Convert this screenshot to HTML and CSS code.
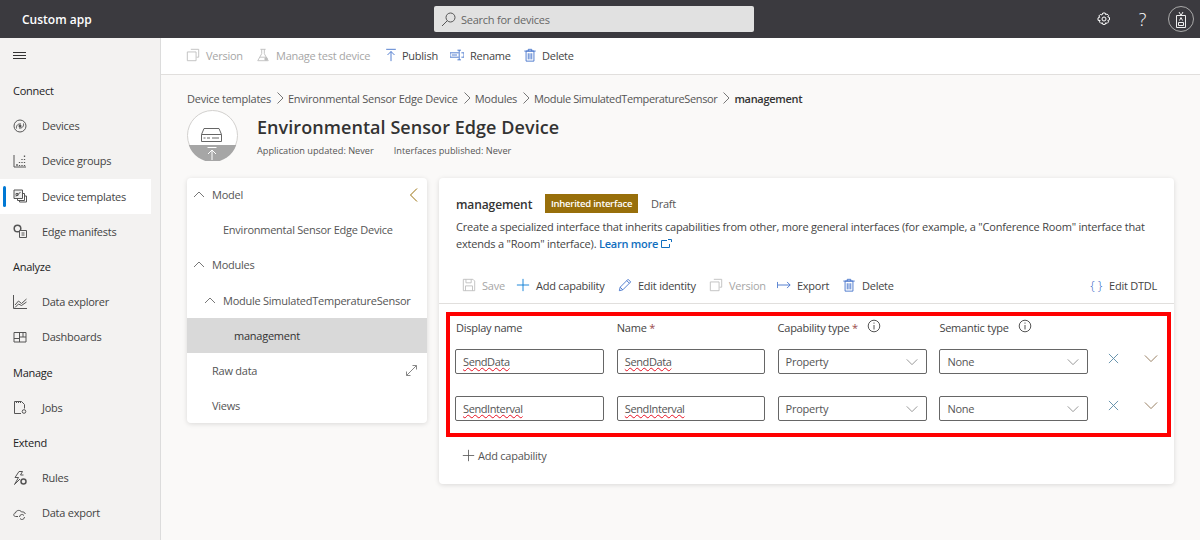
FILE: index.html
```html
<!DOCTYPE html>
<html lang="en">
<head>
    <meta charset="UTF-8">
    <meta name="viewport" content="width=device-width, initial-scale=1.0">
    <title>Device templates | Custom app</title>
    <link rel="stylesheet" href="styles.css">
</head>
<body>
    <svg class="sprites" width="0" height="0">
        <symbol id="i-copy" viewBox="0 0 16 16"><path d="M5.500 1.500h9v9h-2.500M1.500 4.500h10v10h-10z" fill="none" stroke="currentColor"/></symbol>
        <symbol id="i-flask" viewBox="0 0 16 16"><path d="M5 1.500h6M6.500 1.500v5L2 14.500h12L9.500 6.500v-5M4.500 10.500h7" fill="none" stroke="currentColor"/><circle cx="11.500" cy="12.500" r="2" fill="currentColor"/></symbol>
        <symbol id="i-publish" viewBox="0 0 16 16"><path d="M2.500 1.500h11M8 15V4M4 8l4-4 4 4" fill="none" stroke="currentColor"/></symbol>
        <symbol id="i-rename" viewBox="0 0 16 16"><path d="M0 5.500h10M0 10.500h10M0 5.500v5M8 8h-6M10.500 2.500v11M8.500 2.500h4M8.500 13.500h4M13 5.500h3v5h-3" fill="none" stroke="currentColor"/></symbol>
        <symbol id="i-trash" viewBox="0 0 16 16"><path d="M3.500 3.500h9v11.500h-9zM1.500 3.500h13M6 3.500v-2h4v2M6 6v7M8 6v7M10 6v7" fill="none" stroke="currentColor"/></symbol>
        <symbol id="i-save" viewBox="0 0 16 16"><path d="M1.500 1.500h11l2 2v11h-13zM4.500 1.500v4h6v-4M4 14.500v-5.500h8v5.500" fill="none" stroke="currentColor"/></symbol>
        <symbol id="i-plus" viewBox="0 0 16 16"><path d="M8 1v14M1 8h14" fill="none" stroke="currentColor"/></symbol>
        <symbol id="i-pencil" viewBox="0 0 16 16"><path d="M1.500 14.500l1-4L11.500 1.500l3 3-9 9zM2.500 10.500l3 3M10 3l3 3" fill="none" stroke="currentColor"/></symbol>
        <symbol id="i-export" viewBox="0 0 16 16"><path d="M.5 4.500v7M1 8h14M11.500 4.500L15 8l-3.500 3.500" fill="none" stroke="currentColor"/></symbol>
        <symbol id="i-up" viewBox="0 0 12 12"><path d="M1 8l5-5 5 5" fill="none" stroke="currentColor"/></symbol>
        <symbol id="i-down" viewBox="0 0 16 10"><path d="M1 1.500l7 7 7-7" fill="none" stroke="currentColor"/></symbol>
        <symbol id="i-crumb" viewBox="0 0 8 12"><path d="M1.500.5L7 6l-5.500 5.500" fill="none" stroke="currentColor"/></symbol>
        <symbol id="i-info" viewBox="0 0 14 14"><circle cx="7" cy="7" r="5.800" fill="none" stroke="currentColor"/><path d="M7 6v4.500M7 3.500v1.200" fill="none" stroke="currentColor"/></symbol>
        <symbol id="i-x" viewBox="0 0 12 12"><path d="M1 1l10 10M11 1L1 11" fill="none" stroke="currentColor"/></symbol>
    </svg>

    <header class="topbar">
        <div class="app-name">Custom app</div>
        <div class="search">
            <svg class="search-icon" width="15" height="15" viewBox="0 0 15 15"><circle cx="9.500" cy="5.500" r="4.500" fill="none" stroke="#555"/><path d="M6.300 8.700L1 14" fill="none" stroke="#555"/></svg>
            <span>Search for devices</span>
        </div>
        <div class="top-actions">
            <svg class="top-gear" width="14" height="14" viewBox="0 0 14 14"><path d="M5.800 1h2.400l.4 1.600 1.500-.6 1.500 1.500-.8 1.400 1.700.6v2.400l-1.700.6.800 1.400-1.500 1.500-1.500-.6-.4 1.600H5.800l-.4-1.600-1.500.6-1.500-1.500.8-1.400L1 8.300V5.900l1.700-.6-.8-1.400L3.400 2.400l1.500.6z" fill="none" stroke="#fff"/><circle cx="7" cy="7" r="2" fill="none" stroke="#fff"/></svg>
            <span class="top-help">?</span>
            <div class="avatar">
                <svg width="12" height="17" viewBox="0 0 12 17"><path d="M1.500 4.500h9v12h-9zM4 1l2 3.500L8 1M3.500 11.500h5v3h-5z" fill="none" stroke="#eee"/><path d="M4.500 9.500L6 6.500l1.500 3" fill="none" stroke="#eee"/></svg>
            </div>
        </div>
    </header>

    <div class="shell">
        <nav class="sidebar">
            <div class="nav-row nav-menu">
                <svg width="13" height="8" viewBox="0 0 13 8"><path d="M0 .5h13M0 3.500h13M0 6.500h13" stroke="#333"/></svg>
            </div>
            <div class="nav-row nav-head">Connect</div>
            <a class="nav-row nav-item">
                <svg class="nav-icon" viewBox="0 0 14 14"><circle cx="7" cy="7" r="6" fill="none" stroke="#555"/><path d="M3.500 9.500C3 6 5.500 4.500 8 5M10.500 4.500C11 8 8.500 9.500 6 9" fill="none" stroke="#555"/><circle cx="7" cy="7" r="1.500" fill="#555"/></svg>
                Devices
            </a>
            <a class="nav-row nav-item">
                <svg class="nav-icon" viewBox="0 0 14 14"><path d="M1 1v12h12" fill="none" stroke="#555"/><path d="M4 10v2M6.500 8v1M6.500 11v1M9 5v1M9 8v1M9 11v1M11.500 1.500v1.500M11.500 5v1M11.500 8v1M11.500 11v1" stroke="#555" stroke-width="1.300"/></svg>
                Device groups
            </a>
            <a class="nav-row nav-item nav-active">
                <svg class="nav-icon" viewBox="0 0 14 14"><path d="M1 1h8.500v8.500H1z" fill="#eee" stroke="#555"/><path d="M9.500 4.500h2v7h-7v-2M11.500 7h2v6h-7v-1.500" fill="none" stroke="#555"/><path d="M3 7.500L7.500 3M3 4.500h2v2H3z" fill="none" stroke="#555"/></svg>
                Device templates
            </a>
            <a class="nav-row nav-item">
                <svg class="nav-icon" viewBox="0 0 14 14"><circle cx="4.500" cy="4.500" r="3.300" fill="none" stroke="#555" stroke-width="1.500"/><path d="M6.500 6.500h7v7h-7z" fill="#f3f2f1" stroke="#555"/><path d="M8.500 9h3M8.500 11h3" stroke="#555"/></svg>
                Edge manifests
            </a>
            <div class="nav-row nav-head">Analyze</div>
            <a class="nav-row nav-item">
                <svg class="nav-icon" viewBox="0 0 14 14"><path d="M.5 0v13.500H14M2 10l3.500-4 3 2.500L13.500 4M2 12.500l3.500-3.500 3 1.500 5-3.500" fill="none" stroke="#555"/></svg>
                Data explorer
            </a>
            <a class="nav-row nav-item">
                <svg class="nav-icon" viewBox="0 0 14 14"><path d="M1 2.500h12v9.500H1zM6.500 2.500V12M6.500 7H13M1 8.500h5.500M10 2.500V7" fill="none" stroke="#555"/></svg>
                Dashboards
            </a>
            <div class="nav-row nav-head">Manage</div>
            <a class="nav-row nav-item">
                <svg class="nav-icon" viewBox="0 0 14 14"><path d="M8 13.500H1.500v-12h7l3 3v4" fill="none" stroke="#555"/><path d="M3.500 1v2M5.500 1v2M7.500 1v2" stroke="#555"/><circle cx="11" cy="11.500" r="1.800" fill="none" stroke="#555"/></svg>
                Jobs
            </a>
            <div class="nav-row nav-head">Extend</div>
            <a class="nav-row nav-item">
                <svg class="nav-icon" viewBox="0 0 14 14"><path d="M6 .5L2 6.500h3.500L1.500 13.500 7 8M6 .5h3.500l-2 3.500h3" fill="none" stroke="#555"/><circle cx="10.500" cy="10.500" r="2.500" fill="none" stroke="#555" stroke-width="1.500"/></svg>
                Rules
            </a>
            <a class="nav-row nav-item">
                <svg class="nav-icon" viewBox="0 0 14 14"><path d="M5 10.500H2.500C.2 10.500.2 7 2.500 7 2.800 4 7.500 3.500 8.500 6c2-.5 3.500.5 3.800 2" fill="none" stroke="#555"/><path d="M6.500 11a2.500 2.500 0 0 1 4.500-1.500M11.500 11a2.500 2.500 0 0 1-4.500 1.500" fill="none" stroke="#555"/></svg>
                Data export
            </a>
        </nav>

        <main class="content">
            <div class="commandbar">
                <span class="cmd cmd-off cmd-version"><svg class="cmd-icon"><use href="#i-copy"/></svg>Version</span>
                <span class="cmd cmd-off cmd-test"><svg class="cmd-icon"><use href="#i-flask"/></svg>Manage test device</span>
                <span class="cmd cmd-publish"><svg class="cmd-icon"><use href="#i-publish"/></svg>Publish</span>
                <span class="cmd cmd-rename"><svg class="cmd-icon"><use href="#i-rename"/></svg>Rename</span>
                <span class="cmd cmd-delete"><svg class="cmd-icon"><use href="#i-trash"/></svg>Delete</span>
            </div>

            <div class="page">
                <div class="breadcrumb">
                    <span>Device templates</span><svg class="crumb-sep"><use href="#i-crumb"/></svg>
                    <span>Environmental Sensor Edge Device</span><svg class="crumb-sep"><use href="#i-crumb"/></svg>
                    <span>Modules</span><svg class="crumb-sep"><use href="#i-crumb"/></svg>
                    <span class="crumb-module">Module SimulatedTemperatureSensor</span><svg class="crumb-sep"><use href="#i-crumb"/></svg>
                    <b>management</b>
                </div>

                <div class="page-head">
                    <div class="device-badge">
                        <svg width="51" height="51" viewBox="0 0 51 51">
                            <circle cx="25.500" cy="25.500" r="25" fill="#fff" stroke="#d2d0ce"/>
                            <path d="M1.800 35h47.400A25 25 0 0 1 1.800 35z" fill="#a6a6a6"/>
                            <path d="M14.500 24.500l2.500-6h15l2.500 6v7h-20zM14.500 24.500h20" fill="#fff" stroke="#666"/>
                            <path d="M20 28h3M25 28h7M16.500 28h2" stroke="#666"/>
                            <path d="M20.500 37.500h9M25 50V40M21 44l4-4 4 4" fill="none" stroke="#fff"/>
                        </svg>
                    </div>
                    <div class="head-text">
                        <h1>Environmental Sensor Edge Device</h1>
                        <div class="head-meta"><span>Application updated: Never</span><span>Interfaces published: Never</span></div>
                    </div>
                </div>

                <div class="columns">
                    <aside class="tree card">
                        <div class="tree-row tree-top"><svg class="tree-caret"><use href="#i-up"/></svg>Model
                            <svg class="tree-collapse" width="9" height="14" viewBox="0 0 9 14"><path d="M8 .5L1.500 7 8 13.500" fill="none" stroke="#986f0b"/></svg>
                        </div>
                        <div class="tree-row tree-top tree-leaf">Environmental Sensor Edge Device</div>
                        <div class="tree-row tree-top"><svg class="tree-caret"><use href="#i-up"/></svg>Modules</div>
                        <div class="tree-row tree-sub"><svg class="tree-caret"><use href="#i-up"/></svg>Module SimulatedTemperatureSensor</div>
                        <div class="tree-row tree-selected">management</div>
                        <div class="tree-row">Raw data
                            <svg class="tree-expand" width="11" height="11" viewBox="0 0 11 11"><path d="M.5 10.500l10-10M6.500.5h4v4M.5 6.500v4h4" fill="none" stroke="#888"/></svg>
                        </div>
                        <div class="tree-row">Views</div>
                    </aside>

                    <section class="detail card">
                        <div class="detail-head">
                            <div class="detail-title">
                                <h2>management</h2>
                                <span class="badge">Inherited interface</span>
                                <span class="draft">Draft</span>
                            </div>
                            <p class="detail-desc">Create a specialized interface that inherits capabilities from other, more general interfaces (for example, a "Conference Room" interface that extends a "Room" interface). <a class="learn">Learn more <svg width="11" height="9" viewBox="0 0 11 9"><path d="M6 1.500H.5v7h8V5M7 .5h3.500V3" fill="none" stroke="#106ebe"/></svg></a></p>
                        </div>

                        <div class="detail-toolbar">
                            <span class="cmd cmd-off tool-save"><svg class="cmd-icon"><use href="#i-save"/></svg>Save</span>
                            <span class="cmd tool-add"><svg class="cmd-icon cmd-plus"><use href="#i-plus"/></svg>Add capability</span>
                            <span class="cmd tool-edit"><svg class="cmd-icon"><use href="#i-pencil"/></svg>Edit identity</span>
                            <span class="cmd cmd-off tool-version"><svg class="cmd-icon"><use href="#i-copy"/></svg>Version</span>
                            <span class="cmd tool-export"><svg class="cmd-icon"><use href="#i-export"/></svg>Export</span>
                            <span class="cmd"><svg class="cmd-icon"><use href="#i-trash"/></svg>Delete</span>
                            <span class="cmd tool-dtdl"><span class="braces">{ }</span>Edit DTDL</span>
                        </div>

                        <div class="capabilities">
                            <div class="cap-grid cap-labels">
                                <span>Display name</span>
                                <span>Name <i>*</i></span>
                                <span>Capability type <i>*</i><svg class="info"><use href="#i-info"/></svg></span>
                                <span>Semantic type<svg class="info"><use href="#i-info"/></svg></span>
                            </div>
                            <div class="cap-grid cap-row">
                                <div class="field"><span class="misspelt">SendData</span></div>
                                <div class="field"><span class="misspelt">SendData</span></div>
                                <div class="field">Property<svg class="field-arrow"><use href="#i-down"/></svg></div>
                                <div class="field">None<svg class="field-arrow"><use href="#i-down"/></svg></div>
                                <svg class="row-x"><use href="#i-x"/></svg>
                                <svg class="row-down"><use href="#i-down"/></svg>
                            </div>
                            <div class="cap-grid cap-row">
                                <div class="field"><span class="misspelt">SendInterval</span></div>
                                <div class="field"><span class="misspelt">SendInterval</span></div>
                                <div class="field">Property<svg class="field-arrow"><use href="#i-down"/></svg></div>
                                <div class="field">None<svg class="field-arrow"><use href="#i-down"/></svg></div>
                                <svg class="row-x"><use href="#i-x"/></svg>
                                <svg class="row-down"><use href="#i-down"/></svg>
                            </div>
                        </div>

                        <div class="add-row"><svg width="13" height="13"><use href="#i-plus"/></svg>Add capability</div>
                    </section>
                </div>
            </div>
        </main>
    </div>
</body>
</html>
```

FILE: styles.css
```css
* {
    box-sizing: border-box;
}
body {
    font-family: "Open Sans", "Noto Sans", Arial, sans-serif;
    font-size: 11px;
    letter-spacing: -0.25px;
    margin: 0;
    height: 540px;
    overflow: hidden;
    background-color: #faf9f8;
    color: #444;
}
.sprites {
    position: absolute;
}
.topbar {
    height: 38px;
    background-color: #3b3a3f;
    display: flex;
    align-items: center;
    position: relative;
}
.app-name {
    margin-left: 22px;
    width: 412px;
    color: #fff;
    font-size: 12px;
    font-weight: 600;
    letter-spacing: 0;
}
.search {
    width: 320px;
    height: 26px;
    background-color: #e1e1e1;
    border-radius: 2px;
    display: flex;
    align-items: center;
    color: #666;
    padding-left: 7px;
}
.search-icon {
    margin-right: 5px;
}
.top-actions {
    margin-left: auto;
    display: flex;
    align-items: center;
}
.top-gear {
    margin-right: 27.5px;
}
.top-help {
    color: #fff;
    font-size: 18px;
    font-weight: 300;
    margin-right: 22px;
}
.avatar {
    width: 26px;
    height: 26px;
    border: 1px solid #aaa;
    border-radius: 50%;
    margin-right: 6px;
    display: flex;
    align-items: center;
    justify-content: center;
}
.shell {
    display: flex;
    height: 502px;
}
.sidebar {
    width: 161px;
    flex: none;
    background-color: #f3f2f1;
    border-right: 1px solid #dcdcdc;
}
.nav-row {
    height: 35.2px;
    display: flex;
    align-items: center;
    padding-left: 13px;
    margin-right: 9px;
    color: #333;
}
.nav-menu {
    height: 35px;
}
.nav-head {
    color: #222;
}
.nav-item {
    color: #444;
}
.nav-icon {
    width: 14px;
    height: 14px;
    margin-right: 15px;
    flex: none;
}
.nav-active {
    background-color: #fff;
    position: relative;
}
.nav-active::before {
    content: "";
    position: absolute;
    left: 3px;
    top: 7px;
    bottom: 7px;
    width: 3px;
    border-radius: 2px;
    background-color: #0078d4;
}
.content {
    flex: 1;
    min-width: 0;
}
.commandbar {
    height: 37px;
    background-color: #fff;
    border-bottom: 1px solid #e1dfdd;
    display: flex;
    align-items: center;
    padding: 0 0 2px 25px;
}
.cmd {
    display: inline-flex;
    align-items: center;
    color: #444;
    white-space: nowrap;
}
.cmd-off {
    color: #a6a6a6;
}
.cmd-icon {
    width: 14px;
    height: 14px;
    margin-right: 6px;
    color: #3f6fc9;
}
.cmd-off .cmd-icon {
    color: #bdbdbd;
}
.cmd-version {
    width: 70px;
}
.cmd-test {
    width: 128px;
}
.cmd-publish {
    width: 66px;
}
.cmd-publish .cmd-icon {
    margin-right: 4px;
}
.cmd-rename {
    width: 73px;
}
.cmd-delete .cmd-icon {
    margin-right: 5px;
}
.page {
    padding: 15px 26px 0;
}
.breadcrumb {
    height: 16px;
    display: flex;
    align-items: center;
    color: #555;
}
.breadcrumb b {
    color: #333;
    font-weight: 600;
    letter-spacing: -0.3px;
}
.crumb-module {
    letter-spacing: -0.38px;
}
.crumb-sep {
    width: 8px;
    height: 12px;
    margin: 0 4px 0 5px;
    color: #777;
}
.page-head {
    display: flex;
    margin-top: 4px;
    height: 51px;
}
.device-badge {
    width: 51px;
    height: 51px;
}
.head-text {
    margin-left: 19px;
}
.head-text h1 {
    margin: 5px 0 0;
    font-size: 18px;
    line-height: 24px;
    font-weight: 600;
    letter-spacing: 0.06px;
    color: #333;
}
.head-meta {
    margin-top: 5px;
    font-size: 9.2px;
    letter-spacing: 0;
    color: #555;
    display: flex;
    gap: 20px;
}
.columns {
    display: flex;
    gap: 12px;
    margin-top: 17px;
}
.card {
    background-color: #fff;
    border-radius: 4px;
    box-shadow: 0 1px 5px rgba(0, 0, 0, 0.13);
}
.tree {
    width: 240px;
    height: 245px;
    flex: none;
    overflow: hidden;
}
.tree-row {
    height: 35px;
    display: flex;
    align-items: center;
    position: relative;
    padding-left: 25px;
    color: #555;
}
.tree-top {
    padding-bottom: 2px;
}
.tree-caret {
    width: 12px;
    height: 12px;
    position: absolute;
    left: 6px;
    color: #777;
}
.tree-leaf {
    padding-left: 36px;
}
.tree-sub {
    padding-left: 36px;
}
.tree-sub .tree-caret {
    left: 17px;
}
.tree-selected {
    background-color: #d9d9d9;
    padding-left: 47px;
    color: #333;
}
.tree-collapse {
    position: absolute;
    right: 9px;
}
.tree-expand {
    position: absolute;
    right: 10px;
}
.detail {
    width: 735px;
    height: 306px;
    flex: none;
}
.detail-head {
    padding: 15px 17px 0;
    height: 91px;
}
.detail-title {
    display: flex;
    align-items: center;
    height: 20px;
}
.detail-title h2 {
    margin: 0;
    padding-top: 2px;
    font-size: 12px;
    font-weight: 600;
    letter-spacing: -0.1px;
    color: #333;
    width: 89px;
}
.badge {
    background-color: #986f0b;
    color: #fff;
    font-size: 9.500px;
    font-weight: 600;
    height: 19px;
    width: 93px;
    display: flex;
    align-items: center;
    justify-content: center;
}
.draft {
    margin-left: 13px;
    color: #555;
}
.detail-desc {
    margin: 5px 0 0;
    line-height: 17px;
    letter-spacing: -0.2px;
    color: #444;
}
.learn {
    color: #106ebe;
    font-weight: 600;
    letter-spacing: -0.25px;
}
.detail-toolbar {
    height: 35px;
    border-bottom: 1px solid #e1dfdd;
    display: flex;
    align-items: center;
    padding: 0 17px 2px 23px;
}
.tool-save {
    width: 54px;
}
.tool-add {
    width: 102px;
}
.tool-edit {
    width: 91px;
}
.tool-version {
    width: 68px;
}
.tool-export {
    width: 65px;
}
.tool-dtdl {
    margin-left: auto;
}
.cmd-plus {
    color: #0078d4;
}
.braces {
    color: #3f6fc9;
    font-size: 13px;
    font-weight: 300;
    margin-right: 7px;
}
.capabilities {
    margin: 8px 3px 0 7px;
    height: 125px;
    border: 4px solid #f00;
    padding: 0 5px;
}
.cap-grid {
    display: grid;
    grid-template-columns: 149px 148px 149px 149px 1fr 1fr;
    column-gap: 12.8px;
    align-items: center;
}
.cap-labels {
    height: 22px;
    color: #444;
}
.cap-labels span:first-child {
    padding-left: 1px;
}
.cap-labels i {
    font-style: normal;
    color: #9a4a4a;
}
.info {
    width: 14px;
    height: 14px;
    margin-left: 9px;
    vertical-align: -1px;
    color: #555;
}
.cap-row {
    margin-top: 11px;
    height: 25px;
}
.cap-row + .cap-row {
    margin-top: 22px;
}
.field {
    height: 25px;
    border: 1px solid #666;
    border-radius: 2px;
    display: flex;
    align-items: center;
    justify-content: space-between;
    padding: 0 8px 0 7px;
    color: #555;
}
.misspelt {
    letter-spacing: -0.4px;
    text-decoration: underline wavy #e81123 1px;
    text-underline-offset: 1px;
}
.field-arrow {
    width: 12px;
    height: 8px;
    color: #777;
}
.row-x {
    width: 11px;
    height: 11px;
    margin: 0 0 6px 7px;
    color: #5b8ba6;
}
.row-down {
    width: 14px;
    height: 9px;
    margin: 0 0 6px 6px;
    color: #8a6f4e;
}
.add-row {
    display: flex;
    align-items: center;
    gap: 3px;
    margin: 10px 0 0 23px;
    height: 16px;
    color: #555;
}
```
